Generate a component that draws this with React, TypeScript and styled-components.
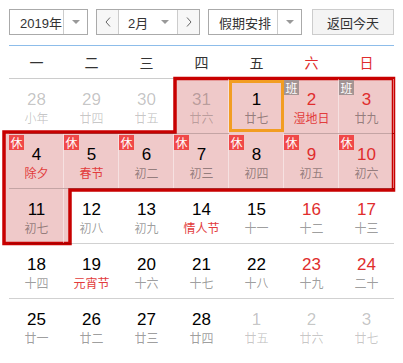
import React from "react";
import styled, { createGlobalStyle, css } from "styled-components";

const GlobalStyle = createGlobalStyle`
  html, body {
    margin: 0;
    padding: 0;
    background: #fff;
  }
  body {
    font-family: "Liberation Sans", Arial, "Noto Sans CJK SC", sans-serif;
    color: #000;
  }
`;

const Wrapper = styled.div`
  width: 385px;
  padding: 9px 9px 0 9px;
`;

const Toolbar = styled.div`
  display: flex;
  align-items: center;
  height: 26px;
`;

const SelectBox = styled.div<{ $width: number; $gap: number }>`
  display: flex;
  box-sizing: border-box;
  width: ${(p) => p.$width}px;
  height: 26px;
  margin-right: ${(p) => p.$gap}px;
  border: 1px solid #aaa;
  background: #fff;
  font-size: 13px;
  color: #333;
`;

const SelectLabel = styled.div`
  flex: 1;
  display: flex;
  align-items: center;
  padding-left: 10px;
  border-right: 1px solid #ccc;
`;

const ArrowCell = styled.div`
  width: 23px;
  display: flex;
  align-items: center;
  justify-content: center;
`;

const Caret = styled.span`
  width: 0;
  height: 0;
  border-left: 4px solid transparent;
  border-right: 4px solid transparent;
  border-top: 4px solid #999;
`;

const StepButton = styled.div<{ $side: "left" | "right" }>`
  width: 21px;
  display: flex;
  align-items: center;
  justify-content: center;
  background: #f7f7f7;
  ${(p) => (p.$side === "left" ? "border-right: 1px solid #ccc;" : "border-left: 1px solid #ccc;")}
`;

const MonthLabel = styled.div`
  flex: 1;
  display: flex;
  align-items: center;
  justify-content: space-between;
  padding: 0 8px 0 9px;
`;

const TodayButton = styled.div`
  box-sizing: border-box;
  width: 82px;
  height: 26px;
  display: flex;
  align-items: center;
  justify-content: center;
  border: 1px solid #ccc;
  background: #f4f4f4;
  font-size: 13px;
  color: #333;
`;

const WeekHeader = styled.div`
  display: grid;
  grid-template-columns: repeat(7, 55px);
  margin-top: 10px;
  height: 32px;
  border-top: 1px solid #8dbdea;
  border-bottom: 1px solid #ccc;
`;

const WeekName = styled.div<{ $weekend?: boolean }>`
  display: flex;
  align-items: center;
  justify-content: center;
  font-size: 14px;
  color: ${(p) => (p.$weekend ? "#e02d2d" : "#333")};
`;

const Grid = styled.div`
  position: relative;
  display: grid;
  grid-template-columns: repeat(7, 55px);
  grid-auto-rows: 55px;
`;

const Highlight = styled.svg`
  position: absolute;
  left: 0;
  top: 0;
  width: 385px;
  height: 275px;
  overflow: visible;
  pointer-events: none;
  z-index: 0;
`;

const Cell = styled.div<{ $last: boolean; $holiday: boolean; $today: boolean }>`
  position: relative;
  z-index: 1;
  box-sizing: border-box;
  display: flex;
  flex-direction: column;
  align-items: center;
  padding-top: 11px;
  border-bottom: ${(p) => (p.$last ? "none" : "1px solid rgba(0, 0, 0, 0.18)")};
  ${(p) =>
    p.$holiday &&
    css`
      box-shadow: inset -1px 0 rgba(255, 255, 255, 0.45);
    `}
  ${(p) =>
    p.$today &&
    css`
      box-shadow: inset 0 0 0 3px #f29d22;
      border-bottom-color: transparent;
      margin: 1px 0 1px 0;
      padding-top: 10px;
    `}
`;

type Tone = "normal" | "weekend" | "other";

const DayNum = styled.div<{ $tone: Tone }>`
  font-size: 17px;
  line-height: 20px;
  color: ${(p) => (p.$tone === "weekend" ? "#e02d2d" : p.$tone === "other" ? "rgba(0, 0, 0, 0.24)" : "#000")};
`;

const Lunar = styled.div<{ $tone: "plain" | "fest" | "other" }>`
  font-family: "Noto Sans CJK SC", sans-serif;
  font-size: 12px;
  line-height: 16px;
  color: ${(p) => (p.$tone === "fest" ? "#e23c3c" : p.$tone === "other" ? "rgba(0, 0, 0, 0.22)" : "rgba(0, 0, 0, 0.4)")};
`;

const Badge = styled.span<{ $kind: "rest" | "work" }>`
  position: absolute;
  left: 0;
  top: 1px;
  width: 15px;
  height: 15px;
  font-family: "Noto Sans CJK SC", sans-serif;
  font-size: 12px;
  line-height: 15px;
  text-align: center;
  color: #fff;
  background: ${(p) => (p.$kind === "rest" ? "#f04848" : "#a39494")};
`;

interface Day {
  n: number;
  lunar: string;
  other?: boolean;
  fest?: boolean;
  badge?: "rest" | "work";
  holiday?: boolean;
  today?: boolean;
}

const weeks: Day[][] = [
  [
    { n: 28, lunar: "小年", other: true },
    { n: 29, lunar: "廿四", other: true },
    { n: 30, lunar: "廿五", other: true },
    { n: 31, lunar: "廿六", other: true, holiday: true },
    { n: 1, lunar: "廿七", holiday: true, today: true },
    { n: 2, lunar: "湿地日", fest: true, badge: "work", holiday: true },
    { n: 3, lunar: "廿九", badge: "work", holiday: true },
  ],
  [
    { n: 4, lunar: "除夕", fest: true, badge: "rest", holiday: true },
    { n: 5, lunar: "春节", fest: true, badge: "rest", holiday: true },
    { n: 6, lunar: "初二", badge: "rest", holiday: true },
    { n: 7, lunar: "初三", badge: "rest", holiday: true },
    { n: 8, lunar: "初四", badge: "rest", holiday: true },
    { n: 9, lunar: "初五", badge: "rest", holiday: true },
    { n: 10, lunar: "初六", badge: "rest", holiday: true },
  ],
  [
    { n: 11, lunar: "初七", holiday: true },
    { n: 12, lunar: "初八" },
    { n: 13, lunar: "初九" },
    { n: 14, lunar: "情人节", fest: true },
    { n: 15, lunar: "十一" },
    { n: 16, lunar: "十二" },
    { n: 17, lunar: "十三" },
  ],
  [
    { n: 18, lunar: "十四" },
    { n: 19, lunar: "元宵节", fest: true },
    { n: 20, lunar: "十六" },
    { n: 21, lunar: "十七" },
    { n: 22, lunar: "十八" },
    { n: 23, lunar: "十九" },
    { n: 24, lunar: "二十" },
  ],
  [
    { n: 25, lunar: "廿一" },
    { n: 26, lunar: "廿二" },
    { n: 27, lunar: "廿三" },
    { n: 28, lunar: "廿四" },
    { n: 1, lunar: "廿五", other: true },
    { n: 2, lunar: "廿六", other: true },
    { n: 3, lunar: "廿七", other: true },
  ],
];

const weekNames = ["一", "二", "三", "四", "五", "六", "日"];

const Chevron = ({ dir }: { dir: "left" | "right" }) => (
  <svg width="6" height="10" viewBox="0 0 6 10">
    <polyline
      points={dir === "left" ? "5,0.5 1,5 5,9.5" : "1,0.5 5,5 1,9.5"}
      fill="none"
      stroke="#666"
      strokeWidth="1"
    />
  </svg>
);

const outline = "M166,-0.5 L384.5,-0.5 L384.5,111 L61,111 L61,164.5 L-5,164.5 L-5,53 L166,53 Z";

export default function App() {
  return (
    <Wrapper>
      <GlobalStyle />
      <Toolbar>
        <SelectBox $width={79} $gap={8}>
          <SelectLabel>2019年</SelectLabel>
          <ArrowCell>
            <Caret />
          </ArrowCell>
        </SelectBox>
        <SelectBox $width={104} $gap={8}>
          <StepButton $side="left">
            <Chevron dir="left" />
          </StepButton>
          <MonthLabel>
            2月
            <Caret />
          </MonthLabel>
          <StepButton $side="right">
            <Chevron dir="right" />
          </StepButton>
        </SelectBox>
        <SelectBox $width={94} $gap={10}>
          <SelectLabel>假期安排</SelectLabel>
          <ArrowCell>
            <Caret />
          </ArrowCell>
        </SelectBox>
        <TodayButton>返回今天</TodayButton>
      </Toolbar>

      <WeekHeader>
        {weekNames.map((w, i) => (
          <WeekName key={w} $weekend={i >= 5}>
            {w}
          </WeekName>
        ))}
      </WeekHeader>

      <Grid>
        <Highlight viewBox="0 0 385 275">
          <path d={outline} fill="#efc9c9" stroke="#c80000" strokeWidth="3.5" />
        </Highlight>
        {weeks.map((week, r) =>
          week.map((d, c) => {
            const tone: Tone = d.other ? "other" : c >= 5 ? "weekend" : "normal";
            return (
              <Cell key={`${r}-${c}`} $last={r === weeks.length - 1} $holiday={!!d.holiday} $today={!!d.today}>
                {d.badge && <Badge $kind={d.badge}>{d.badge === "rest" ? "休" : "班"}</Badge>}
                <DayNum $tone={tone}>{d.n}</DayNum>
                <Lunar $tone={d.fest ? "fest" : d.other ? "other" : "plain"}>{d.lunar}</Lunar>
              </Cell>
            );
          })
        )}
      </Grid>
    </Wrapper>
  );
}
